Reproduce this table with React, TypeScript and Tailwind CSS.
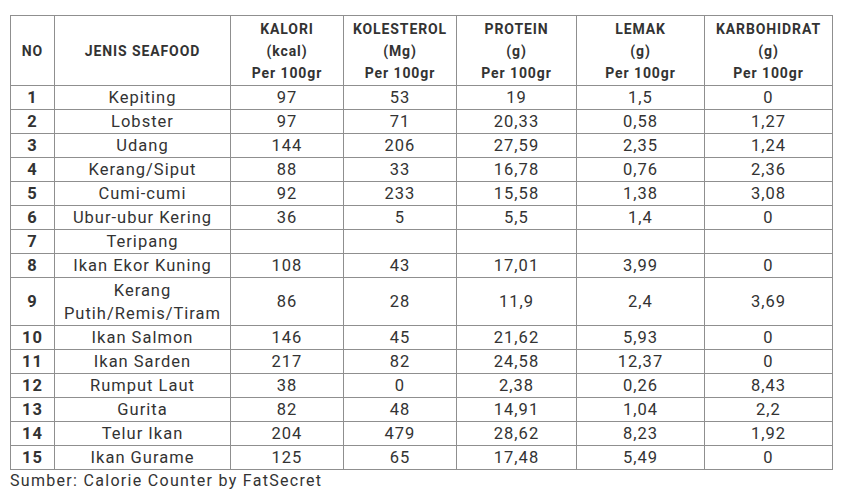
const rows: [string, string, string, string, string, string, string][] = [
  ["1", "Kepiting", "97", "53", "19", "1,5", "0"],
  ["2", "Lobster", "97", "71", "20,33", "0,58", "1,27"],
  ["3", "Udang", "144", "206", "27,59", "2,35", "1,24"],
  ["4", "Kerang/Siput", "88", "33", "16,78", "0,76", "2,36"],
  ["5", "Cumi-cumi", "92", "233", "15,58", "1,38", "3,08"],
  ["6", "Ubur-ubur Kering", "36", "5", "5,5", "1,4", "0"],
  ["7", "Teripang", "", "", "", "", ""],
  ["8", "Ikan Ekor Kuning", "108", "43", "17,01", "3,99", "0"],
  ["9", "Kerang Putih/Remis/Tiram", "86", "28", "11,9", "2,4", "3,69"],
  ["10", "Ikan Salmon", "146", "45", "21,62", "5,93", "0"],
  ["11", "Ikan Sarden", "217", "82", "24,58", "12,37", "0"],
  ["12", "Rumput Laut", "38", "0", "2,38", "0,26", "8,43"],
  ["13", "Gurita", "82", "48", "14,91", "1,04", "2,2"],
  ["14", "Telur Ikan", "204", "479", "28,62", "8,23", "1,92"],
  ["15", "Ikan Gurame", "125", "65", "17,48", "5,49", "0"],
];

const headers: [string, string][] = [
  ["KALORI", "(kcal)"],
  ["KOLESTEROL", "(Mg)"],
  ["PROTEIN", "(g)"],
  ["LEMAK", "(g)"],
  ["KARBOHIDRAT", "(g)"],
];

const cell = "border border-[#8f8f8f] p-0 text-center align-middle";

export default function App() {
  return (
    <div className="min-h-[495px] w-[860px] bg-white pl-[10px] pt-[15px] font-['Roboto',sans-serif] text-[#333]">
      <table className="w-[822px] table-fixed border-collapse">
        <colgroup>
          <col className="w-[44px]" />
          <col className="w-[176px]" />
          <col className="w-[113px]" />
          <col className="w-[113px]" />
          <col className="w-[120px]" />
          <col className="w-[128px]" />
          <col className="w-[128px]" />
        </colgroup>
        <thead>
          <tr className="h-[70px] text-[14px] font-bold leading-[22px] tracking-[0.9px]">
            <th className={cell}>NO</th>
            <th className={cell}>JENIS SEAFOOD</th>
            {headers.map(([name, unit]) => (
              <th key={name} className={cell}>
                <div>{name}</div>
                <div>{unit}</div>
                <div>Per 100gr</div>
              </th>
            ))}
          </tr>
        </thead>
        <tbody className="text-[16.5px] leading-[22px] tracking-[1px]">
          {rows.map(([no, name, ...values]) => (
            <tr key={no} className={no === "9" ? "h-[48px]" : "h-[24px]"}>
              <td className={`${cell} font-bold`}>{no}</td>
              <td className={cell}>
                {no === "9" ? (
                  <div className="leading-[23px]">
                    <div>Kerang</div>
                    <div>Putih/Remis/Tiram</div>
                  </div>
                ) : (
                  name
                )}
              </td>
              {values.map((value, i) => (
                <td key={i} className={cell}>
                  {value}
                </td>
              ))}
            </tr>
          ))}
        </tbody>
      </table>
      <p className="text-[16px] leading-[22px] tracking-[1.3px]">Sumber: Calorie Counter by FatSecret</p>
    </div>
  );
}
